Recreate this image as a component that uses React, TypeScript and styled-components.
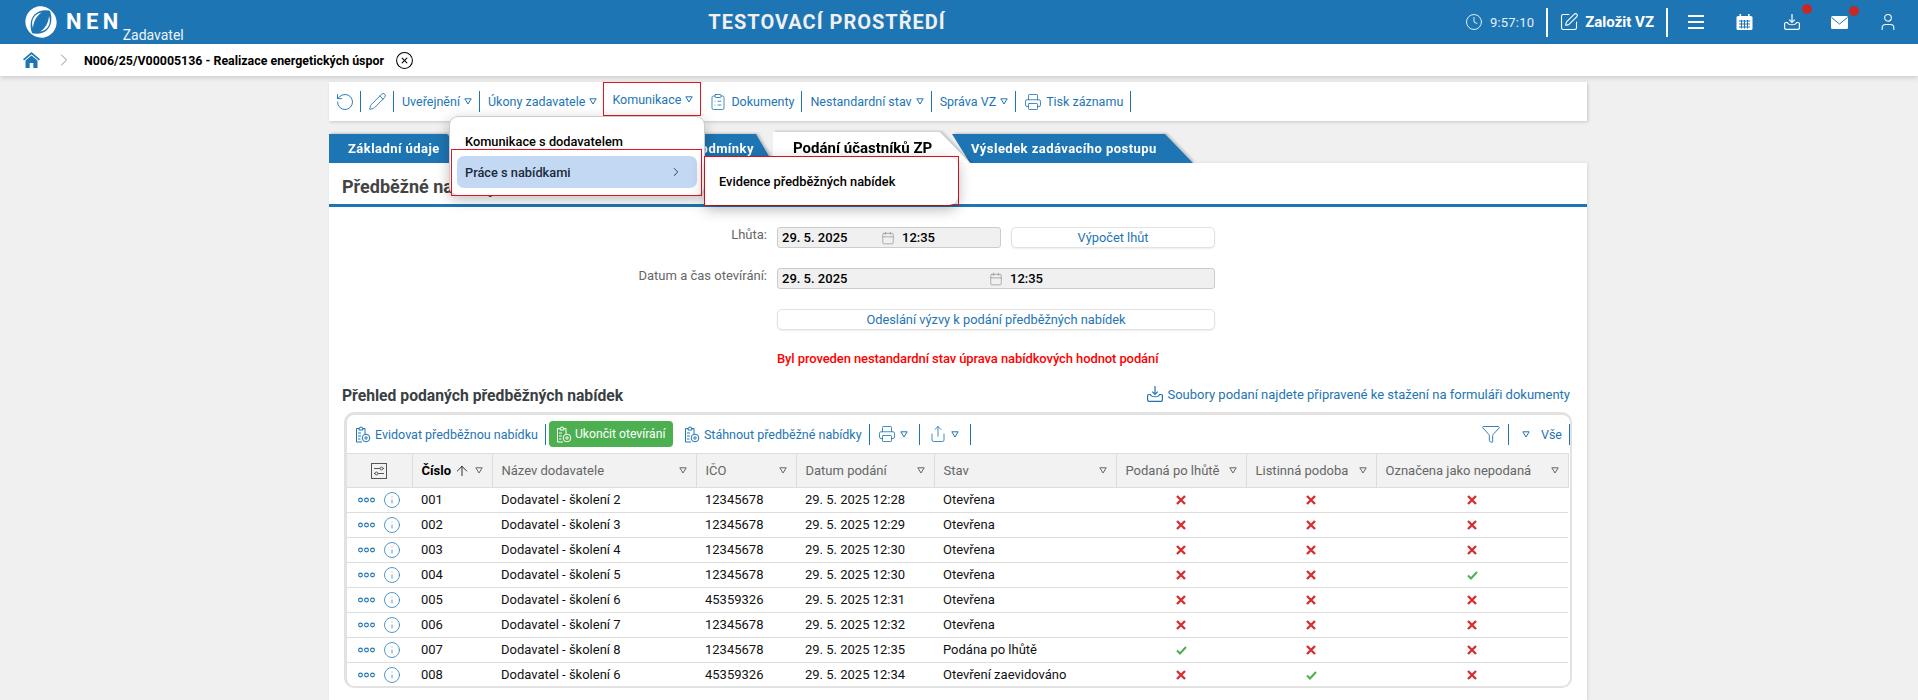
import React from "react";
import styled, { createGlobalStyle } from "styled-components";
import {
  ArrowUp,
  Calendar,
  ChevronRight,
  CircleX,
  ClipboardList,
  Clock,
  Funnel,
  Info,
  Pencil,
  Printer,
  RotateCcw,
  Share,
  SquarePen,
  User,
} from "lucide-react";

const BLUE = "#1e75b3";

const GlobalStyle = createGlobalStyle`
  html, body {
    margin: 0;
    height: 700px;
    overflow: hidden;
    background: #f0f0f0;
    font-family: Roboto, "Liberation Sans", sans-serif;
    font-size: 13px;
    color: #000;
  }
  svg {
    flex: none;
  }
`;

/* drawings */
const Logo = () => (
  <svg width="32" height="32" viewBox="0 0 32 32" fill="none">
    <path d="M24.5 3.5C30 7 33 14 31 20.5 29.5 26 25 30 19.5 31.5 13.5 32.500 8 30 5 26.500 11 29 18 28 22.500 23.500 27 19 27.500 11.500 24.500 3.500Z" fill="#fff" />
    <path d="M7.500 28.500C2 25 -1 18 1 11.500 2.500 6 7 2 12.500 .5 18.500 -.5 24 2 27 5.500 21 3 14 4 9.500 8.500 5 13 4.500 20.500 7.500 28.500Z" fill="#fff" />
    <path d="M8 22C5 14 10 7 17 6.500 12 9 8.500 15 8 22Z" fill="#fff" />
    <path d="M24 10C27 18 22 25 15 25.500 20 23 23.500 17 24 10Z" fill="#fff" />
  </svg>
);

const HomeIcon = () => (
  <svg width="17" height="16" viewBox="0 0 17 16" fill={BLUE}>
    <path d="M8.5 0 17 7.2 15.9 8.4 8.5 2.2 1.1 8.4 0 7.2Z" />
    <path d="M8.5 3.6 14.5 8.6V16H10.3V11H6.7V16H2.5V8.6Z" />
  </svg>
);

const Tri = ({ color = BLUE }: { color?: string }) => (
  <svg width="8" height="7" viewBox="0 0 8 7" fill="none" stroke={color} strokeWidth="1">
    <path d="M.8.8H7.2L4 6Z" />
  </svg>
);

const HamburgerIcon = () => (
  <svg width="16" height="14" viewBox="0 0 16 14" fill="#fff">
    <rect y="0" width="16" height="2" />
    <rect y="6" width="16" height="2" />
    <rect y="12" width="16" height="2" />
  </svg>
);

const CalendarIcon = () => (
  <svg width="17" height="16" viewBox="0 0 17 16">
    <rect x=".5" y="2" width="16" height="14" rx="1.5" fill="#fff" />
    <rect x="3.5" y="0" width="1.6" height="3" fill="#fff" />
    <rect x="12" y="0" width="1.6" height="3" fill="#fff" />
    <path d="M3 7H14M3 10H14M3 13H14M5.500 6V14.500M8.500 6V14.500M11.500 6V14.500" stroke={BLUE} strokeWidth="1" />
  </svg>
);

const TrayIcon = ({ color = "#fff" }: { color?: string }) => (
  <svg width="16" height="16" viewBox="0 0 16 16" fill="none" stroke={color} strokeWidth="1.2">
    <path d="M8 0V8M5.200 5.600 8 8.400 10.800 5.600" />
    <path d="M3.500 8.500H2A1.400 1.400 0 0 0 .6 10V14A1.400 1.400 0 0 0 2 15.400H14A1.400 1.400 0 0 0 15.400 14V10A1.400 1.400 0 0 0 14 8.500H12.500C12 11.500 4 11.500 3.500 8.500Z" />
  </svg>
);

const MailIcon = () => (
  <svg width="17" height="13" viewBox="0 0 17 13">
    <rect width="17" height="13" rx="1.5" fill="#fff" />
    <path d="M.5 1.5 8.500 8 16.500 1.500" fill="none" stroke={BLUE} strokeWidth="1" />
  </svg>
);

const ClipGearIcon = ({ color = BLUE }: { color?: string }) => (
  <svg width="16" height="17" viewBox="0 0 16 17" fill="none" stroke={color} strokeWidth="1">
    <path d="M4 2.500H1.500V16H7M10 8V2.500H7.500" />
    <path d="M4 4V2H5C5 .4 7 .4 7 2H8V4Z" />
    <path d="M3 7H6M3 10H6M3 13H5.500" />
    <circle cx="11" cy="12" r="3.800" />
    <circle cx="11" cy="12" r="1.200" />
  </svg>
);

const ColumnsIcon = () => (
  <svg width="16" height="16" viewBox="0 0 16 16" fill="none" stroke="#555" strokeWidth="1">
    <rect x=".5" y=".5" width="15" height="15" />
    <path d="M3 5.500H9M12 5.500H13M3 10.500H4M7 10.500H13" />
    <circle cx="10.500" cy="5.500" r="1.400" />
    <circle cx="5.500" cy="10.500" r="1.400" />
  </svg>
);

const DotsIcon = () => (
  <svg width="17" height="6" viewBox="0 0 17 6" fill="none" stroke={BLUE} strokeWidth="1.1">
    <circle cx="2.500" cy="3" r="1.900" />
    <circle cx="8.500" cy="3" r="1.900" />
    <circle cx="14.500" cy="3" r="1.900" />
  </svg>
);

const CrossIcon = () => (
  <svg width="10" height="10" viewBox="0 0 10 10" stroke="#d5302f" strokeWidth="2.400">
    <path d="M1 1 9 9M9 1 1 9" />
  </svg>
);

const CheckIcon = () => (
  <svg width="11" height="9" viewBox="0 0 11 9" fill="none" stroke="#4caf50" strokeWidth="2">
    <path d="M1 4.500 4 7.500 10 1" />
  </svg>
);

/* top bar */
const TopBar = styled.header`
  height: 44px;
  background: ${BLUE};
  display: flex;
  align-items: center;
  color: #fff;
`;
const Brand = styled.div`
  width: 188px;
  padding: 6px 0 0 25px;
  display: flex;
  align-items: flex-start;
  height: 44px;
  box-sizing: border-box;
  flex: none;
`;
const BrandName = styled.span`
  font-size: 22px;
  font-weight: 700;
  letter-spacing: 4.4px;
  line-height: 26px;
  margin: 3px 0 0 9px;
`;
const BrandRole = styled.span`
  font-size: 14px;
  line-height: 16px;
  margin: 21px 0 0 0;
  color: #eef5fa;
`;
const EnvTitle = styled.h1`
  flex: 1;
  margin: 0;
  text-align: center;
  font-size: 20px;
  font-weight: 700;
  letter-spacing: 1px;
  color: #f0f0f0;
`;
const TopActions = styled.div`
  width: 452px;
  flex: none;
  display: flex;
  align-items: center;
  height: 44px;
`;
const Time = styled.span`
  display: flex;
  align-items: center;
  gap: 7px;
  font-size: 13px;
  color: #e6eff6;
  letter-spacing: 0.2px;
  margin-left: -1px;
`;
const TopDivider = styled.span<{ $right: number }>`
  width: 2px;
  height: 29px;
  background: #fff;
  margin: 0 ${(p) => p.$right}px 0 12px;
`;
const CreateLink = styled.span`
  display: flex;
  align-items: center;
  gap: 6px;
  font-size: 15px;
  font-weight: 700;
`;
const TopIcon = styled.span<{ $width: number }>`
  position: relative;
  width: ${(p) => p.$width}px;
  display: flex;
  justify-content: flex-start;
  flex: none;
`;
const RedDot = styled.span`
  position: absolute;
  top: -10px;
  left: 18px;
  width: 10px;
  height: 10px;
  border-radius: 50%;
  background: #c62828;
`;

/* breadcrumb */
const Crumbs = styled.nav`
  position: relative;
  height: 32px;
  background: #fff;
  box-shadow: 0 2px 5px rgba(0, 0, 0, 0.15);
  display: flex;
  align-items: center;
  padding-left: 23px;
  font-size: 12.4px;
  font-weight: 700;
`;
const CrumbChevron = styled.span`
  display: flex;
  color: #777;
  margin: 0 10px 0 14px;
`;
const CrumbClose = styled.span`
  display: flex;
  margin-left: 11px;
`;

/* page column */
const Content = styled.main`
  position: relative;
  width: 1258px;
  margin: 6px 0 0 329px;
`;
const ActionBar = styled.div`
  height: 39px;
  background: #fff;
  box-shadow: 1px 1px 3px rgba(0, 0, 0, 0.18);
  display: flex;
  align-items: center;
  padding-left: 6px;
  color: ${BLUE};
  font-size: 12.5px;
`;
const Sep = styled.span<{ $l?: number; $r?: number; $h?: number }>`
  width: 1px;
  height: ${(p) => p.$h ?? 21}px;
  background: ${BLUE};
  margin: 0 ${(p) => p.$r ?? 8}px 0 ${(p) => p.$l ?? 7}px;
  flex: none;
`;
const ActionItem = styled.span<{ $boxed?: boolean }>`
  display: flex;
  align-items: center;
  gap: 4px;
  white-space: nowrap;
  flex: none;
  ${(p) =>
    p.$boxed &&
    `
    box-sizing: border-box;
    align-self: flex-start;
    height: 34px;
    width: 98px;
    margin: 0 8px 0 6px;
    padding-left: 8px;
    border: 1px solid #e5141f;
  `}
`;

/* dropdown */
const Menu = styled.div`
  position: absolute;
  z-index: 5;
  left: 120px;
  top: 34px;
  width: 256px;
  height: 80px;
  box-sizing: border-box;
  background: #fff;
  border-radius: 9px;
  border: 1px solid #ccc;
  box-shadow: 0 4px 14px rgba(0, 0, 0, 0.25);
  font-weight: 500;
  font-size: 12.8px;
`;
const MenuItem = styled.div`
  height: 32px;
  padding: 17px 0 0 15px;
  box-sizing: border-box;
  line-height: 16px;
`;
const MarkedRow = styled.div`
  box-sizing: border-box;
  height: 47px;
  margin: 0 2px 0 1px;
  padding: 6px 4px 0 5px;
  border: 1px solid #e5141f;
`;
const HoverItem = styled.div`
  height: 32px;
  border-radius: 7px;
  background: #c3d9f3;
  display: flex;
  align-items: center;
  justify-content: space-between;
  padding: 0 14px 0 8px;
  color: #1a2a3a;
`;
const SubMenu = styled.div`
  position: absolute;
  left: 100%;
  top: 39px;
  width: 255px;
  height: 50px;
  box-sizing: border-box;
  border: 1px solid #e5141f;
`;
const SubMenuCard = styled.div`
  height: 100%;
  background: #fff;
  border-radius: 0 9px 9px 0;
  box-shadow: 0 4px 14px rgba(0, 0, 0, 0.3);
  display: flex;
  align-items: center;
  padding-left: 14px;
`;

/* tabs */
const Tabs = styled.div`
  display: flex;
  align-items: flex-end;
  height: 31px;
  margin-top: 11px;
`;
const TabWrap = styled.div<{ $width: number; $overlap?: number; $front?: boolean }>`
  width: ${(p) => p.$width}px;
  margin-left: ${(p) => -(p.$overlap ?? 0)}px;
  position: relative;
  z-index: ${(p) => (p.$front ? 2 : 1)};
  filter: drop-shadow(2px -1px 1px rgba(0, 0, 0, 0.18));
`;
const TabFace = styled.div<{ $shape: string; $active?: boolean; $end?: boolean; $pad: string }>`
  height: ${(p) => (p.$active ? 31 : 29)}px;
  clip-path: polygon(${(p) => p.$shape});
  background: ${(p) => (p.$active ? "#fff" : BLUE)};
  color: ${(p) => (p.$active ? "#000" : "#fff")};
  font-weight: 700;
  font-size: ${(p) => (p.$active ? 15 : 13)}px;
  letter-spacing: ${(p) => (p.$active ? 0 : 0.45)}px;
  display: flex;
  align-items: center;
  justify-content: ${(p) => (p.$end ? "flex-end" : "flex-start")};
  padding: ${(p) => p.$pad};
  box-sizing: border-box;
  white-space: nowrap;
`;

/* panel */
const Panel = styled.section`
  background: #fff;
  height: 537px;
  box-sizing: border-box;
  box-shadow: 1px 0 3px rgba(0, 0, 0, 0.1);
`;
const PanelTitle = styled.h2`
  margin: 0;
  height: 44px;
  box-sizing: border-box;
  border-bottom: 3px solid ${BLUE};
  padding: 13px 0 0 13px;
  font-size: 18px;
  line-height: 22px;
  font-weight: 700;
  color: #444;
`;
const FormGrid = styled.div`
  display: grid;
  grid-template-columns: 438px 224px 204px;
  column-gap: 10px;
  row-gap: 20px;
  padding-top: 20px;
`;
const FieldLabel = styled.label`
  text-align: right;
  color: #666;
  line-height: 15px;
`;
const ReadOnlyField = styled.div<{ $wide?: boolean }>`
  grid-column: ${(p) => (p.$wide ? "2 / span 2" : "auto")};
  height: 21px;
  box-sizing: border-box;
  border: 1px solid #ccc;
  border-radius: 3px;
  background: #f0f0f0;
  display: flex;
  align-items: center;
  font-weight: 500;
  padding-left: 4px;
`;
const DatePart = styled.span`
  flex: 1;
`;
const CalendarBox = styled.span`
  display: flex;
  color: #888;
  margin-right: 7px;
`;
const TimePart = styled.span<{ $width: number }>`
  width: ${(p) => p.$width}px;
`;
const OutlineButton = styled.button<{ $wide?: boolean }>`
  grid-column: ${(p) => (p.$wide ? "2 / span 2" : "auto")};
  height: 21px;
  padding: 0;
  background: #fff;
  border: 1px solid #e2e2e2;
  border-radius: 5px;
  box-shadow: 0 1px 2px rgba(0, 0, 0, 0.08);
  color: ${BLUE};
  font: 400 12.8px Roboto, sans-serif;
`;
const WarningText = styled.p`
  margin: 20px 0 0 448px;
  color: #f00;
  font-weight: 500;
  line-height: 18px;
  letter-spacing: -0.1px;
`;
const SectionHead = styled.div`
  display: flex;
  justify-content: space-between;
  padding: 16px 17px 0 13px;
  height: 26px;
`;
const SectionTitle = styled.h3`
  margin: 2px 0 0;
  font-size: 15.7px;
  line-height: 20px;
  font-weight: 700;
  color: #3a3f44;
`;
const SectionLink = styled.span`
  display: flex;
  align-items: center;
  gap: 4px;
  height: 20px;
  color: ${BLUE};
  font-size: 13px;
`;

/* table card */
const Card = styled.div`
  margin: 2px 15px 0 15px;
  height: 276px;
  box-sizing: border-box;
  border: 3px solid #e2e2e2;
  border-right-width: 2px;
  border-bottom-width: 2px;
  border-radius: 10px;
  overflow: hidden;
`;
const CardBar = styled.div`
  height: 38px;
  display: flex;
  align-items: center;
  padding-left: 8px;
  color: ${BLUE};
  font-size: 12.5px;
`;
const GreenButton = styled.span`
  display: flex;
  align-items: center;
  gap: 3px;
  height: 26px;
  padding: 0 0 0 7px;
  box-sizing: border-box;
  width: 124px;
  background: #4caf50;
  border-radius: 4px;
  color: #fff;
  margin-right: 11px;
  flex: none;
  white-space: nowrap;
  font-size: 12.2px;
`;
const CardBarEnd = styled.span`
  margin-left: auto;
  display: flex;
  align-items: center;
  gap: 6px;
`;
const AllLabel = styled.span`
  margin-left: 5px;
`;
const Grid = styled.table`
  width: 1221px;
  table-layout: fixed;
  border-collapse: collapse;
`;
const GridCol = styled.col<{ $width: number }>`
  width: ${(p) => p.$width}px;
`;
const HeadCell = styled.th<{ $strong?: boolean }>`
  height: 34px;
  padding: 0 9px;
  box-sizing: border-box;
  background: #f2f2f2;
  border-top: 1px solid #ddd;
  border-bottom: 1px solid #ddd;
  border-right: 1px solid #ddd;
  text-align: left;
  font-weight: ${(p) => (p.$strong ? 700 : 400)};
  color: ${(p) => (p.$strong ? "#000" : "#666")};
  white-space: nowrap;
`;
const HeadInner = styled.span<{ $center?: boolean }>`
  display: flex;
  align-items: center;
  justify-content: ${(p) => (p.$center ? "center" : "space-between")};
`;
const HeadSort = styled.span`
  display: flex;
  align-items: center;
  gap: 3px;
`;
const BodyRow = styled.tr`
  height: 25px;
  border-bottom: 1px solid #ddd;
`;
const Cell = styled.td<{ $center?: boolean }>`
  padding: 0 9px;
  white-space: nowrap;
  color: #111;
  text-align: ${(p) => (p.$center ? "center" : "left")};
  line-height: 0;
  & > span {
    line-height: 16px;
  }
`;
const RowTools = styled.span`
  display: flex;
  align-items: center;
  gap: 8px;
  color: ${BLUE};
  margin-left: 2px;
`;

const columns = [65, 80, 204, 100, 138, 182, 130, 130, 192];

type Row = {
  no: string;
  name: string;
  ico: string;
  date: string;
  status: string;
  late?: boolean;
  paper?: boolean;
  rejected?: boolean;
};

const rows: Row[] = [
  { no: "001", name: "Dodavatel - školení 2", ico: "12345678", date: "29. 5. 2025 12:28", status: "Otevřena" },
  { no: "002", name: "Dodavatel - školení 3", ico: "12345678", date: "29. 5. 2025 12:29", status: "Otevřena" },
  { no: "003", name: "Dodavatel - školení 4", ico: "12345678", date: "29. 5. 2025 12:30", status: "Otevřena" },
  { no: "004", name: "Dodavatel - školení 5", ico: "12345678", date: "29. 5. 2025 12:30", status: "Otevřena", rejected: true },
  { no: "005", name: "Dodavatel - školení 6", ico: "45359326", date: "29. 5. 2025 12:31", status: "Otevřena" },
  { no: "006", name: "Dodavatel - školení 7", ico: "12345678", date: "29. 5. 2025 12:32", status: "Otevřena" },
  { no: "007", name: "Dodavatel - školení 8", ico: "12345678", date: "29. 5. 2025 12:35", status: "Podána po lhůtě", late: true },
  { no: "008", name: "Dodavatel - školení 6", ico: "45359326", date: "29. 5. 2025 12:34", status: "Otevření zaevidováno", paper: true },
];

const Flag = ({ on }: { on?: boolean }) => (
  <Cell $center>{on ? <CheckIcon /> : <CrossIcon />}</Cell>
);

const heads = ["Název dodavatele", "IČO", "Datum podání", "Stav", "Podaná po lhůtě", "Listinná podoba", "Označena jako nepodaná"];

export default function App() {
  return (
    <>
      <GlobalStyle />
      <TopBar>
        <Brand>
          <Logo />
          <BrandName>NEN</BrandName>
          <BrandRole>Zadavatel</BrandRole>
        </Brand>
        <EnvTitle>TESTOVACÍ PROSTŘEDÍ</EnvTitle>
        <TopActions>
          <Time>
            <Clock size={18} strokeWidth={1.3} />
            9:57:10
          </Time>
          <TopDivider $right={11} />
          <CreateLink>
            <SquarePen size={20} strokeWidth={1.3} />
            Založit VZ
          </CreateLink>
          <TopDivider $right={20} />
          <TopIcon $width={48}><HamburgerIcon /></TopIcon>
          <TopIcon $width={48}><CalendarIcon /></TopIcon>
          <TopIcon $width={47}><TrayIcon /><RedDot /></TopIcon>
          <TopIcon $width={47}><MailIcon /><RedDot /></TopIcon>
          <TopIcon $width={22}><User size={20} strokeWidth={1.3} /></TopIcon>
        </TopActions>
      </TopBar>
      <Crumbs>
        <HomeIcon />
        <CrumbChevron><ChevronRight size={20} strokeWidth={1} /></CrumbChevron>
        N006/25/V00005136 - Realizace energetických úspor
        <CrumbClose><CircleX size={19} strokeWidth={1.3} /></CrumbClose>
      </Crumbs>
      <Content>
        <ActionBar>
          <RotateCcw size={20} strokeWidth={1.1} />
          <Sep $l={5} $r={7} />
          <Pencil size={19} strokeWidth={1.1} />
          <Sep $l={6} />
          <ActionItem>Uveřejnění <Tri /></ActionItem>
          <Sep $l={7} />
          <ActionItem>Úkony zadavatele <Tri /></ActionItem>
          <ActionItem $boxed>Komunikace <Tri /></ActionItem>
          <ActionItem><ClipboardList size={18} strokeWidth={1.1} />Dokumenty</ActionItem>
          <Sep />
          <ActionItem>Nestandardní stav <Tri /></ActionItem>
          <Sep />
          <ActionItem>Správa VZ <Tri /></ActionItem>
          <Sep />
          <ActionItem><Printer size={18} strokeWidth={1.1} />Tisk záznamu</ActionItem>
          <Sep />
        </ActionBar>
        <Menu>
          <MenuItem>Komunikace s dodavatelem</MenuItem>
          <MarkedRow>
            <HoverItem>
              Práce s nabídkami
              <ChevronRight size={14} strokeWidth={1.5} />
            </HoverItem>
          </MarkedRow>
          <SubMenu>
            <SubMenuCard>Evidence předběžných nabídek</SubMenuCard>
          </SubMenu>
        </Menu>
        <Tabs>
          <TabWrap $width={146}>
            <TabFace $shape="0 0, calc(100% - 28px) 0, 100% 100%, 0 100%" $pad="0 0 0 19px">Základní údaje</TabFace>
          </TabWrap>
          <TabWrap $width={298}>
            <TabFace $shape="18px 0, calc(100% - 17px) 0, 100% 100%, 18px 100%" $end $pad="0 19px 0 0">Zadávací podmínky</TabFace>
          </TabWrap>
          <TabWrap $width={197} $front>
            <TabFace $active $shape="0 0, calc(100% - 30px) 0, 100% 100%, 0 100%" $pad="0 0 0 20px">Podání účastníků ZP</TabFace>
          </TabWrap>
          <TabWrap $width={241} $overlap={18}>
            <TabFace $shape="0 0, calc(100% - 28px) 0, 100% 100%, 18px 100%" $pad="0 0 0 19px">Výsledek zadávacího postupu</TabFace>
          </TabWrap>
        </Tabs>
        <Panel>
          <PanelTitle>Předběžné nabídky</PanelTitle>
          <FormGrid>
            <FieldLabel>Lhůta:</FieldLabel>
            <ReadOnlyField>
              <DatePart>29. 5. 2025</DatePart>
              <CalendarBox><Calendar size={14} strokeWidth={1.1} /></CalendarBox>
              <TimePart $width={98}>12:35</TimePart>
            </ReadOnlyField>
            <OutlineButton>Výpočet lhůt</OutlineButton>
            <FieldLabel>Datum a čas otevírání:</FieldLabel>
            <ReadOnlyField $wide>
              <DatePart>29. 5. 2025</DatePart>
              <CalendarBox><Calendar size={14} strokeWidth={1.1} /></CalendarBox>
              <TimePart $width={204}>12:35</TimePart>
            </ReadOnlyField>
            <span />
            <OutlineButton $wide>Odeslání výzvy k podání předběžných nabídek</OutlineButton>
          </FormGrid>
          <WarningText>Byl proveden nestandardní stav úprava nabídkových hodnot podání</WarningText>
          <SectionHead>
            <SectionTitle>Přehled podaných předběžných nabídek</SectionTitle>
            <SectionLink>
              <TrayIcon color={BLUE} />
              Soubory podaní najdete připravené ke stažení na formuláři dokumenty
            </SectionLink>
          </SectionHead>
          <Card>
            <CardBar>
              <ActionItem><ClipGearIcon />Evidovat předběžnou nabídku</ActionItem>
              <Sep $l={7} $r={3} />
              <GreenButton><ClipGearIcon color="#fff" />Ukončit otevírání</GreenButton>
              <ActionItem><ClipGearIcon />Stáhnout předběžné nabídky</ActionItem>
              <Sep />
              <ActionItem><Printer size={18} strokeWidth={1.1} /><Tri /></ActionItem>
              <Sep $l={11} $r={9} />
              <ActionItem><Share size={18} strokeWidth={1.1} /><Tri /></ActionItem>
              <Sep $l={11} />
              <CardBarEnd>
                <Funnel size={20} strokeWidth={1.1} />
                <Sep $l={1} $r={7} />
                <Tri />
                <AllLabel>Vše</AllLabel>
                <Sep $l={1} $r={0} />
              </CardBarEnd>
            </CardBar>
            <Grid>
              <colgroup>
                {columns.map((w, i) => (
                  <GridCol key={i} $width={w} />
                ))}
              </colgroup>
              <thead>
                <tr>
                  <HeadCell>
                    <HeadInner $center><ColumnsIcon /></HeadInner>
                  </HeadCell>
                  <HeadCell $strong>
                    <HeadInner>
                      <HeadSort>Číslo <ArrowUp size={16} strokeWidth={1.2} /></HeadSort>
                      <Tri color="#666" />
                    </HeadInner>
                  </HeadCell>
                  {heads.map((h) => (
                    <HeadCell key={h}>
                      <HeadInner>{h}<Tri color="#666" /></HeadInner>
                    </HeadCell>
                  ))}
                </tr>
              </thead>
              <tbody>
                {rows.map((r) => (
                  <BodyRow key={r.no}>
                    <Cell>
                      <RowTools>
                        <DotsIcon />
                        <Info size={18} strokeWidth={1} />
                      </RowTools>
                    </Cell>
                    <Cell><span>{r.no}</span></Cell>
                    <Cell><span>{r.name}</span></Cell>
                    <Cell><span>{r.ico}</span></Cell>
                    <Cell><span>{r.date}</span></Cell>
                    <Cell><span>{r.status}</span></Cell>
                    <Flag on={r.late} />
                    <Flag on={r.paper} />
                    <Flag on={r.rejected} />
                  </BodyRow>
                ))}
              </tbody>
            </Grid>
          </Card>
        </Panel>
      </Content>
    </>
  );
}
